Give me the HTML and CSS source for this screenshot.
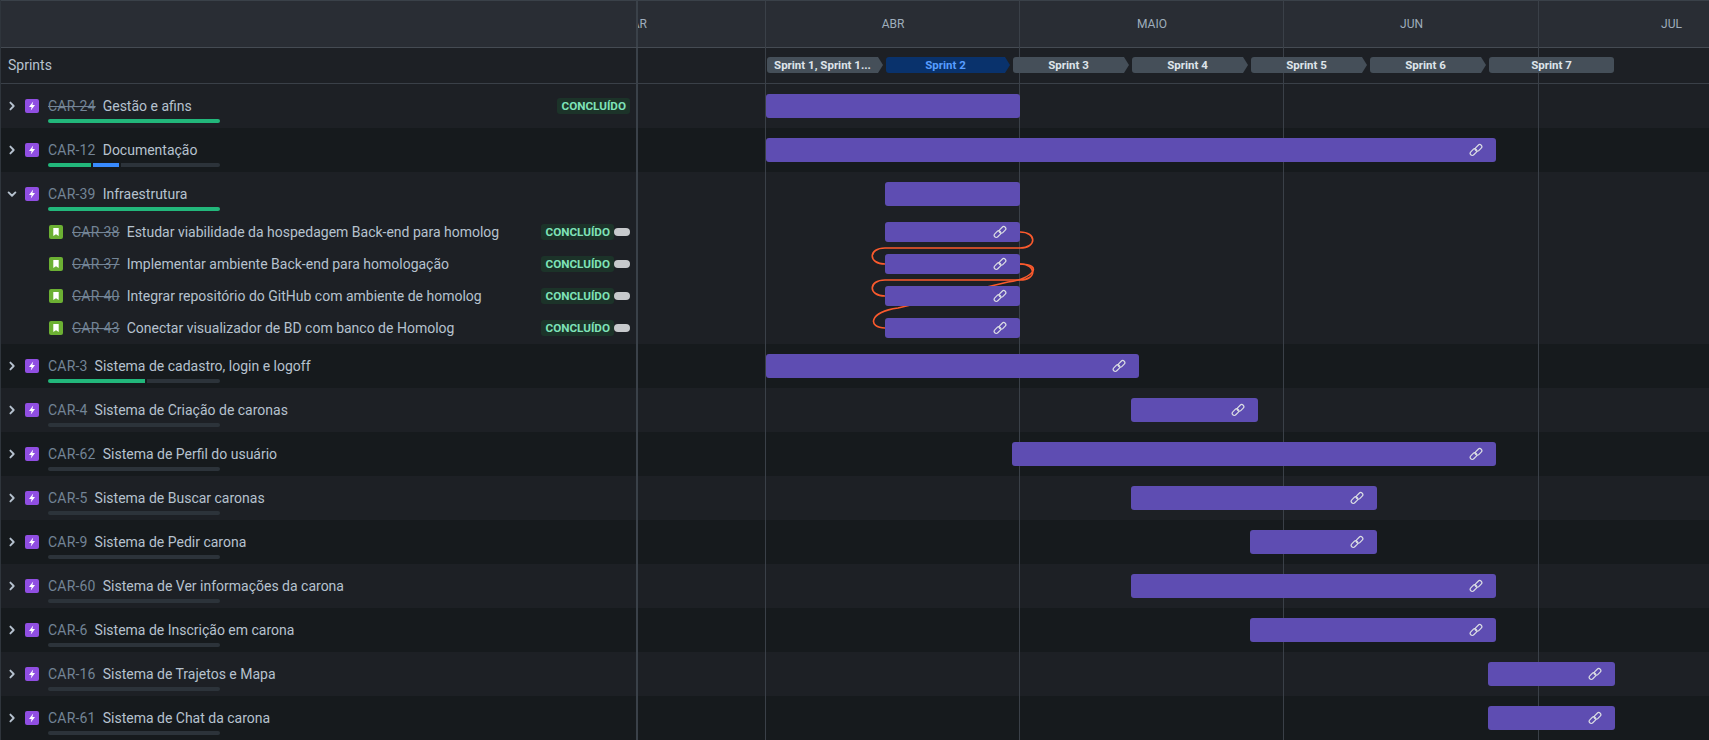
FILE: index.html
```html
<!DOCTYPE html>
<html lang="pt-BR">
<head>
    <meta charset="utf-8">
    <title>Linha do tempo</title>
    <link rel="stylesheet" href="styles.css">
</head>
<body>
    <svg class="defs" width="0" height="0">
        <symbol id="i-right" viewBox="0 0 16 16"><path d="M6.4 4.6 9.7 8l-3.3 3.4" fill="none" stroke="currentColor" stroke-width="1.9" stroke-linecap="round" stroke-linejoin="round"/></symbol>
        <symbol id="i-down" viewBox="0 0 16 16"><path d="M4.6 6.4 8 9.7l3.4-3.3" fill="none" stroke="currentColor" stroke-width="1.9" stroke-linecap="round" stroke-linejoin="round"/></symbol>
        <symbol id="i-epic" viewBox="0 0 14 14"><rect width="14" height="14" rx="2" fill="#904ee2"/><path d="M8.2 2.4 4 7.9h2.6L5.8 11.6 10 6.1H7.4z" fill="#fff"/></symbol>
        <symbol id="i-story" viewBox="0 0 14 14"><rect width="14" height="14" rx="2" fill="#6cb033"/><path d="M4.3 3h5.4v8L7 9.2 4.3 11z" fill="#fff"/></symbol>
        <symbol id="i-link" viewBox="0 0 14 14"><g fill="none" stroke="currentColor" stroke-width="1.2"><rect x="0.7" y="7" width="7.6" height="4.2" rx="2.1" transform="rotate(-45 4.5 9.1)"/><rect x="5.7" y="2.8" width="7.6" height="4.2" rx="2.1" transform="rotate(-45 9.5 4.9)"/></g></symbol>
    </svg>

    <main class="roadmap">
        <!-- month lines, under the bars -->
        <div class="grid-lines">
            <span class="w-first"></span>
            <span class="w-abr"></span>
            <span class="w-maio"></span>
            <span class="w-jun"></span>
        </div>

        <header class="head-row">
            <div class="side"></div>
            <div class="months">
                <span class="month w-mar">MAR</span>
                <span class="month w-abr">ABR</span>
                <span class="month w-maio">MAIO</span>
                <span class="month w-jun">JUN</span>
                <span class="month w-jul">JUL</span>
            </div>
        </header>

        <section class="sprint-row">
            <div class="side sprint-title">Sprints</div>
            <div class="sprints">
                <span class="sprint">Sprint 1, Sprint 1...</span>
                <span class="sprint current">Sprint 2</span>
                <span class="sprint">Sprint 3</span>
                <span class="sprint">Sprint 4</span>
                <span class="sprint">Sprint 5</span>
                <span class="sprint">Sprint 6</span>
                <span class="sprint last">Sprint 7</span>
            </div>
        </section>

        <section class="row">
            <div class="side">
                <svg class="chev"><use href="#i-right"/></svg>
                <svg class="type"><use href="#i-epic"/></svg>
                <div class="info">
                    <div class="line"><s class="key">CAR-24</s><span class="title">Gestão e afins</span></div>
                    <div class="progress"><i class="done" style="width:100%"></i></div>
                </div>
                <span class="lozenge">CONCLUÍDO</span>
            </div>
            <div class="track"><div class="bar" style="left:128px;width:254px"></div></div>
        </section>

        <section class="row alt">
            <div class="side">
                <svg class="chev"><use href="#i-right"/></svg>
                <svg class="type"><use href="#i-epic"/></svg>
                <div class="info">
                    <div class="line"><span class="key">CAR-12</span><span class="title">Documentação</span></div>
                    <div class="progress"><i class="done" style="width:43px"></i><i class="doing" style="width:26px"></i><i class="todo"></i></div>
                </div>
            </div>
            <div class="track"><div class="bar" style="left:128px;width:730px"><svg class="link"><use href="#i-link"/></svg></div></div>
        </section>

        <section class="row">
            <div class="side">
                <svg class="chev"><use href="#i-down"/></svg>
                <svg class="type"><use href="#i-epic"/></svg>
                <div class="info">
                    <div class="line"><span class="key">CAR-39</span><span class="title">Infraestrutura</span></div>
                    <div class="progress"><i class="done" style="width:100%"></i></div>
                </div>
            </div>
            <div class="track"><div class="bar" style="left:247px;width:135px"></div></div>
        </section>

        <section class="row sub">
            <div class="side">
                <svg class="type"><use href="#i-story"/></svg>
                <s class="key">CAR-38</s><span class="title">Estudar viabilidade da hospedagem Back-end para homolog</span>
                <span class="lozenge">CONCLUÍDO</span><span class="pill"></span>
            </div>
            <div class="track"><div class="bar" style="left:247px;width:135px"><svg class="link"><use href="#i-link"/></svg></div></div>
        </section>
        <section class="row sub">
            <div class="side">
                <svg class="type"><use href="#i-story"/></svg>
                <s class="key">CAR-37</s><span class="title">Implementar ambiente Back-end para homologação</span>
                <span class="lozenge">CONCLUÍDO</span><span class="pill"></span>
            </div>
            <div class="track"><div class="bar" style="left:247px;width:135px"><svg class="link"><use href="#i-link"/></svg></div></div>
        </section>
        <section class="row sub">
            <div class="side">
                <svg class="type"><use href="#i-story"/></svg>
                <s class="key">CAR-40</s><span class="title">Integrar repositório do GitHub com ambiente de homolog</span>
                <span class="lozenge">CONCLUÍDO</span><span class="pill"></span>
            </div>
            <div class="track"><div class="bar" style="left:247px;width:135px"><svg class="link"><use href="#i-link"/></svg></div></div>
        </section>
        <section class="row sub">
            <div class="side">
                <svg class="type"><use href="#i-story"/></svg>
                <s class="key">CAR-43</s><span class="title">Conectar visualizador de BD com banco de Homolog</span>
                <span class="lozenge">CONCLUÍDO</span><span class="pill"></span>
            </div>
            <div class="track"><div class="bar" style="left:247px;width:135px"><svg class="link"><use href="#i-link"/></svg></div></div>
        </section>

        <section class="row alt">
            <div class="side">
                <svg class="chev"><use href="#i-right"/></svg>
                <svg class="type"><use href="#i-epic"/></svg>
                <div class="info">
                    <div class="line"><span class="key">CAR-3</span><span class="title">Sistema de cadastro, login e logoff</span></div>
                    <div class="progress"><i class="done" style="width:97px"></i><i class="todo"></i></div>
                </div>
            </div>
            <div class="track"><div class="bar" style="left:128px;width:373px"><svg class="link"><use href="#i-link"/></svg></div></div>
        </section>

        <section class="row">
            <div class="side">
                <svg class="chev"><use href="#i-right"/></svg>
                <svg class="type"><use href="#i-epic"/></svg>
                <div class="info">
                    <div class="line"><span class="key">CAR-4</span><span class="title">Sistema de Criação de caronas</span></div>
                    <div class="progress"><i class="todo"></i></div>
                </div>
            </div>
            <div class="track"><div class="bar" style="left:493px;width:127px"><svg class="link"><use href="#i-link"/></svg></div></div>
        </section>

        <section class="row alt">
            <div class="side">
                <svg class="chev"><use href="#i-right"/></svg>
                <svg class="type"><use href="#i-epic"/></svg>
                <div class="info">
                    <div class="line"><span class="key">CAR-62</span><span class="title">Sistema de Perfil do usuário</span></div>
                    <div class="progress"><i class="todo"></i></div>
                </div>
            </div>
            <div class="track"><div class="bar" style="left:374px;width:484px"><svg class="link"><use href="#i-link"/></svg></div></div>
        </section>

        <section class="row">
            <div class="side">
                <svg class="chev"><use href="#i-right"/></svg>
                <svg class="type"><use href="#i-epic"/></svg>
                <div class="info">
                    <div class="line"><span class="key">CAR-5</span><span class="title">Sistema de Buscar caronas</span></div>
                    <div class="progress"><i class="todo"></i></div>
                </div>
            </div>
            <div class="track"><div class="bar" style="left:493px;width:246px"><svg class="link"><use href="#i-link"/></svg></div></div>
        </section>

        <section class="row alt">
            <div class="side">
                <svg class="chev"><use href="#i-right"/></svg>
                <svg class="type"><use href="#i-epic"/></svg>
                <div class="info">
                    <div class="line"><span class="key">CAR-9</span><span class="title">Sistema de Pedir carona</span></div>
                    <div class="progress"><i class="todo"></i></div>
                </div>
            </div>
            <div class="track"><div class="bar" style="left:612px;width:127px"><svg class="link"><use href="#i-link"/></svg></div></div>
        </section>

        <section class="row">
            <div class="side">
                <svg class="chev"><use href="#i-right"/></svg>
                <svg class="type"><use href="#i-epic"/></svg>
                <div class="info">
                    <div class="line"><span class="key">CAR-60</span><span class="title">Sistema de Ver informações da carona</span></div>
                    <div class="progress"><i class="todo"></i></div>
                </div>
            </div>
            <div class="track"><div class="bar" style="left:493px;width:365px"><svg class="link"><use href="#i-link"/></svg></div></div>
        </section>

        <section class="row alt">
            <div class="side">
                <svg class="chev"><use href="#i-right"/></svg>
                <svg class="type"><use href="#i-epic"/></svg>
                <div class="info">
                    <div class="line"><span class="key">CAR-6</span><span class="title">Sistema de Inscrição em carona</span></div>
                    <div class="progress"><i class="todo"></i></div>
                </div>
            </div>
            <div class="track"><div class="bar" style="left:612px;width:246px"><svg class="link"><use href="#i-link"/></svg></div></div>
        </section>

        <section class="row">
            <div class="side">
                <svg class="chev"><use href="#i-right"/></svg>
                <svg class="type"><use href="#i-epic"/></svg>
                <div class="info">
                    <div class="line"><span class="key">CAR-16</span><span class="title">Sistema de Trajetos e Mapa</span></div>
                    <div class="progress"><i class="todo"></i></div>
                </div>
            </div>
            <div class="track"><div class="bar" style="left:850px;width:127px"><svg class="link"><use href="#i-link"/></svg></div></div>
        </section>

        <section class="row alt">
            <div class="side">
                <svg class="chev"><use href="#i-right"/></svg>
                <svg class="type"><use href="#i-epic"/></svg>
                <div class="info">
                    <div class="line"><span class="key">CAR-61</span><span class="title">Sistema de Chat da carona</span></div>
                    <div class="progress"><i class="todo"></i></div>
                </div>
            </div>
            <div class="track"><div class="bar" style="left:850px;width:127px"><svg class="link"><use href="#i-link"/></svg></div></div>
        </section>

        <!-- dependency lines, bars sit on top of them -->
        <svg class="deps" width="200" height="120" viewBox="860 225 200 120">
            <g fill="none" stroke="#fb5a2d" stroke-width="1.6">
                <path d="M1020 232C1037 232 1037 248 1020 248L885 248C868 248 868 264 885 264"/>
                <path d="M1020 264C1037 264 1037 280 1020 280L885 280C868 280 868 296 885 296"/>
                <path d="M1020 264C1044 264 1033 279 1008 282L898 308C868 312 868 328 885 328"/>
            </g>
        </svg>
    </main>
</body>
</html>
```

FILE: styles.css
```css
* {
    box-sizing: border-box;
}

html, body {
    margin: 0;
    height: 100%;
    overflow: hidden;
    background: #1d2125;
}

body {
    font: 14px/16px Roboto, "Liberation Sans", sans-serif;
    color: #b6c2cf;
}

.defs {
    position: absolute;
}

.roadmap {
    position: relative;
    height: 740px;
    overflow: hidden;
    border-left: 1px solid #2f353c;
}

/* month lines */
.grid-lines {
    position: absolute;
    z-index: 1;
    top: 0;
    bottom: 0;
    left: 637px;
    display: flex;
    pointer-events: none;
}

.grid-lines span {
    border-right: 1px solid #3a4048;
}

.w-first { width: 128px; }
.w-mar { width: 264px; margin-left: -136px; }
.w-abr { width: 254px; }
.w-maio { width: 264px; }
.w-jun { width: 255px; }
.w-jul { width: 265px; }

.side {
    flex: none;
    display: flex;
    width: 637px;
    border-right: 2px solid #3a4149;
}

/* header */
.head-row {
    display: flex;
    height: 48px;
    background: #292d34;
    border-top: 1px solid #3a4149;
    border-bottom: 1px solid #454b53;
}

.months {
    display: flex;
    flex: 1;
    overflow: hidden;
}

.month {
    flex: none;
    font-size: 12px;
    line-height: 46px;
    text-align: center;
    color: #9fadbc;
}

.sprint-row {
    display: flex;
    height: 36px;
    background: #1d2025;
    border-bottom: 1px solid #3a4048;
}

.sprint-title {
    align-items: center;
    padding: 0 0 2px 7px;
}

.sprints {
    position: relative;
    z-index: 2;
    display: flex;
    gap: 3px;
    padding: 9px 0 0 129px;
}

.sprint {
    position: relative;
    width: 111px;
    height: 16px;
    margin-right: 5px;
    background: #454f59;
    border-radius: 3px 0 0 3px;
    font-size: 11.5px;
    font-weight: 700;
    line-height: 17px;
    text-align: center;
    white-space: nowrap;
    color: #dee4ea;
}

.sprint::after {
    content: "";
    position: absolute;
    top: 0;
    left: 100%;
    border-left: 5px solid #454f59;
    border-top: 8px solid transparent;
    border-bottom: 8px solid transparent;
}

.sprint.current {
    width: 119px;
    background: #09326c;
    color: #579dff;
}

.sprint.current::after {
    border-left-color: #09326c;
}

.sprint.last {
    width: 125px;
    margin-right: 0;
    border-radius: 3px;
}

.sprint.last::after {
    display: none;
}

/* rows */
.row {
    display: flex;
    height: 44px;
    background: #1d2025;
}

.row.alt {
    background: #161a1d;
}

.row .side {
    padding: 14px 6px 0 3px;
}

.row.sub {
    height: 32px;
}

.row.sub .side {
    align-items: center;
    padding: 0 6px 0 48px;
}

.chev {
    flex: none;
    width: 16px;
    height: 16px;
    color: #b6c2cf;
}

.type {
    flex: none;
    width: 14px;
    height: 14px;
    margin: 1px 9px 0 5px;
}

.sub .type {
    margin: 0 9px 0 0;
}

.info {
    width: 172px;
}

.line {
    display: flex;
    white-space: nowrap;
}

.key {
    flex: none;
    letter-spacing: 0.2px;
    color: #738496;
}

.title {
    margin-left: 7px;
    white-space: nowrap;
}

.progress {
    display: flex;
    gap: 2px;
    height: 4px;
    margin-top: 5px;
    border-radius: 2px;
    overflow: hidden;
}

.progress i {
    display: block;
    height: 4px;
}

.progress .done { background: #22b77b; }
.progress .doing { background: #388bff; }
.progress .todo { flex: 1; background: #2c333a; }

.lozenge {
    flex: none;
    height: 16px;
    margin-left: auto;
    padding: 0 4px;
    background: #1c3329;
    border-radius: 3px;
    font-size: 11.7px;
    font-weight: 700;
    line-height: 17px;
    color: #7ee2b8;
}

.pill {
    flex: none;
    width: 16px;
    height: 8px;
    background: #c7c9cc;
    border-radius: 4px;
}

/* timeline */
.track {
    position: relative;
    flex: 1;
}

.bar {
    position: absolute;
    z-index: 3;
    top: 10px;
    height: 24px;
    background: #5e4db2;
    border-radius: 3px;
    color: #dcdfe4;
}

.sub .bar {
    top: 6px;
    height: 20px;
}

.link {
    position: absolute;
    top: 50%;
    right: 13px;
    width: 14px;
    height: 14px;
    margin-top: -7px;
}

.deps {
    position: absolute;
    z-index: 2;
    top: 225px;
    left: 859px;
    pointer-events: none;
}
```
